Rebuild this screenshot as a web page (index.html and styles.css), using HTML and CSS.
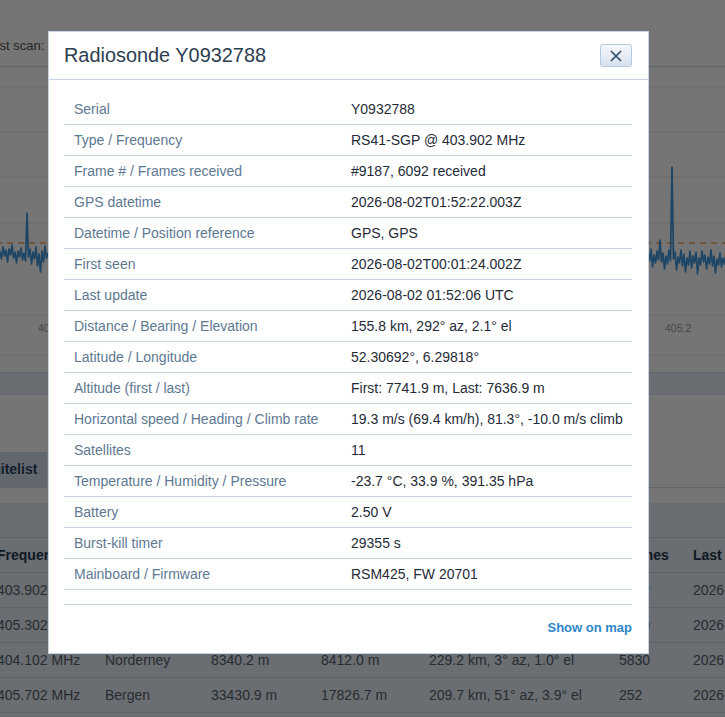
FILE: index.html
```html
<!DOCTYPE html>
<html lang="en">
<head>
  <meta charset="UTF-8">
  <meta name="viewport" content="width=device-width, initial-scale=1.0">
  <title>Radiosonde Y0932788</title>
  <link rel="stylesheet" href="styles.css">
</head>
<body>
  <div class="page">
    <div class="scanbar">Last scan: 2026-08-02 01:52:10 UTC</div>

    <!-- Spectrum -->
    <svg class="chart" width="900" height="306" viewBox="0 0 900 306">
      <g transform="translate(15,0)">
        <line x1="-15" y1="0.5" x2="885" y2="0.5" stroke="#c8dbef" stroke-width="1.5"/>
        <line x1="-15" y1="21" x2="885" y2="21" stroke="#e6e6e6"/>
        <line x1="-15" y1="66" x2="885" y2="66" stroke="#e6e6e6"/>
        <line x1="-15" y1="111" x2="885" y2="111" stroke="#e6e6e6"/>
        <line x1="-15" y1="157" x2="885" y2="157" stroke="#e6e6e6"/>
        <line x1="-15" y1="249" x2="885" y2="249" stroke="#e6e6e6"/>
        <line x1="-15" y1="289" x2="885" y2="289" stroke="#e6e6e6"/>
        <line x1="-15" y1="177" x2="885" y2="177" stroke="#f2a25e" stroke-width="1.3" stroke-dasharray="6 5"/>
        <polyline fill="none" stroke="#3f97dc" stroke-width="1.7" stroke-linejoin="round"
          points="-15,189 -13.5,195 -12,183 -10.5,192 -9,186 -7.5,197 -6,184 -4.5,191 -3,182 -1.5,194
                  0,186 1.5,193 3,181 4.5,190 6,184 7.5,196 9,183 10.5,189 12,179 13.5,192 15,186 16.5,197
                  18,185 19.5,191 21,182 22.5,194 24,187 25.5,195 27,147 28.5,191 30,183 31.5,198 33,186
                  34.5,193 36,181 37.5,200 39,188 40.5,206 42,185 43.5,196 45,180 46.5,192 48,187 49.5,195
                  51,184 120,192 200,186 300,194 400,188 500,193 600,187 640,194
                  645,190 646.5,199 648,186 649.5,195 651,183 652.5,201 654,189 655.5,197 657,185 658.5,194
                  660,174 661.5,196 663,187 664.5,203 666,190 667.5,198 669,184 670.5,195 672,101 673.5,193
                  675,186 676.5,204 678,191 679.5,197 681,184 682.5,200 684,188 685.5,206 687,192 688.5,199
                  690,185 691.5,202 693,190 694.5,197 696,186 697.5,208 699,192 700.5,199 702,185 703.5,196
                  705,189 706.5,203 708,191 709.5,198 711,184 712.5,200 714,190 715.5,207 717,193 718.5,199
                  720,187 721.5,201 723,192 724.5,198 726,188"/>
        <g class="axis-label">
          <text x="38" y="266">400.2</text>
          <text x="163" y="266">401.2</text>
          <text x="288" y="266">402.2</text>
          <text x="413" y="266">403.2</text>
          <text x="538" y="266">404.2</text>
          <text x="665" y="266">405.2</text>
        </g>
      </g>
    </svg>

    <div class="rangebar"></div>

    <div class="tabs">
      <div class="tab">Whitelist</div>
    </div>

    <div class="panel">
      <table class="sondes">
        <thead>
          <tr>
            <th class="c-freq">Frequency</th>
            <th class="c-site">Site</th>
            <th class="c-alt">Altitude</th>
            <th class="c-max">Max altitude</th>
            <th class="c-dist">Distance</th>
            <th class="c-frames">Frames</th>
            <th class="c-last">Last update</th>
          </tr>
        </thead>
        <tbody>
          <tr>
            <td>403.902 MHz</td><td>Deelen</td><td>7636.9 m</td><td>7741.9 m</td>
            <td>155.8 km, 292° az, 2.1° el</td><td>6092</td><td>2026-08-02 01:52:06</td>
          </tr>
          <tr>
            <td>405.302 MHz</td><td>De Bilt</td><td>12850.4 m</td><td>12850.4 m</td>
            <td>98.1 km, 215° az, 7.2° el</td><td>3120</td><td>2026-08-02 01:51:58</td>
          </tr>
          <tr>
            <td>404.102 MHz</td><td>Norderney</td><td>8340.2 m</td><td>8412.0 m</td>
            <td>229.2 km, 3° az, 1.0° el</td><td>5830</td><td>2026-08-02 01:51:44</td>
          </tr>
          <tr>
            <td>405.702 MHz</td><td>Bergen</td><td>33430.9 m</td><td>17826.7 m</td>
            <td>209.7 km, 51° az, 3.9° el</td><td>252</td><td>2026-08-02 01:50:12</td>
          </tr>
        </tbody>
      </table>
    </div>
  </div>

  <div class="backdrop"></div>

  <div class="modal">
    <div class="modal-header">
      <h4 class="modal-title">Radiosonde Y0932788</h4>
      <button class="close" type="button" aria-label="Close">
        <svg width="12" height="12" viewBox="0 0 12 12">
          <path d="M1 1 L11 11 M11 1 L1 11" stroke="#2e4866" stroke-width="1.6" fill="none"/>
        </svg>
      </button>
    </div>
    <div class="modal-body">
      <table class="details">
        <tr><td>Serial</td><td>Y0932788</td></tr>
        <tr><td>Type / Frequency</td><td>RS41-SGP @ 403.902 MHz</td></tr>
        <tr><td>Frame # / Frames received</td><td>#9187, 6092 received</td></tr>
        <tr><td>GPS datetime</td><td>2026-08-02T01:52:22.003Z</td></tr>
        <tr><td>Datetime / Position reference</td><td>GPS, GPS</td></tr>
        <tr><td>First seen</td><td>2026-08-02T00:01:24.002Z</td></tr>
        <tr><td>Last update</td><td>2026-08-02 01:52:06 UTC</td></tr>
        <tr><td>Distance / Bearing / Elevation</td><td>155.8 km, 292° az, 2.1° el</td></tr>
        <tr><td>Latitude / Longitude</td><td>52.30692°, 6.29818°</td></tr>
        <tr><td>Altitude (first / last)</td><td>First: 7741.9 m, Last: 7636.9 m</td></tr>
        <tr><td>Horizontal speed / Heading / Climb rate</td><td>19.3 m/s (69.4 km/h), 81.3°, -10.0 m/s climb</td></tr>
        <tr><td>Satellites</td><td>11</td></tr>
        <tr><td>Temperature / Humidity / Pressure</td><td>-23.7 °C, 33.9 %, 391.35 hPa</td></tr>
        <tr><td>Battery</td><td>2.50 V</td></tr>
        <tr><td>Burst-kill timer</td><td>29355 s</td></tr>
        <tr><td>Mainboard / Firmware</td><td>RSM425, FW 20701</td></tr>
      </table>
    </div>
    <div class="modal-footer">
      <a href="#" class="map-link">Show on map</a>
    </div>
  </div>
</body>
</html>
```

FILE: styles.css
```css
body {
  margin: 0;
  overflow: hidden;
  font-family: "Liberation Sans", Arial, sans-serif;
  background: #ffffff;
  color: #333333;
}

/* page behind the dialog */
.page {
  margin-left: -15px;
  width: 900px;
}
.scanbar {
  height: 66px;
  box-sizing: border-box;
  padding-top: 38px;
  font-size: 13px;
  line-height: 16px;
  color: #555555;
  white-space: nowrap;
}
.chart {
  display: block;
}
.axis-label text {
  font-family: "Liberation Sans", Arial, sans-serif;
  font-size: 10.5px;
  fill: #9a9a9a;
}
.rangebar {
  height: 21px;
  background: #e7eff8;
  border-top: 1px solid #dde3ea;
  border-bottom: 1px solid #dde3ea;
}
.tabs {
  display: flex;
  margin-top: 57px;
  height: 35px;
  border-bottom: 1px solid #d6dee7;
}
.tab {
  margin-left: -12px;
  padding: 0 10px 0 6px;
  background: #d5e0ed;
  font-size: 14px;
  font-weight: bold;
  line-height: 35px;
  color: #2a4560;
}
.panel {
  margin-top: 15px;
  padding-top: 34px;
  background: #e7eff8;
  height: 300px;
}
.sondes {
  border-collapse: collapse;
  table-layout: fixed;
  width: 896px;
  font-size: 14px;
}
.sondes th,
.sondes td {
  padding: 8px 12px;
  line-height: 18px;
  text-align: left;
  white-space: nowrap;
  overflow: visible;
  border-bottom: 1px solid #cfd8e0;
}
.sondes th {
  border-top: 1px solid #cfd8e0;
  color: #22384f;
}
.sondes td {
  color: #55616d;
}
.c-freq { width: 84px; }
.c-site { width: 82px; }
.c-alt { width: 86px; }
.c-max { width: 84px; }
.c-dist { width: 166px; }
.c-frames { width: 50px; }
.c-last { width: 176px; }

/* dialog */
.backdrop {
  position: fixed;
  top: 0;
  left: 0;
  right: 0;
  bottom: 0;
  background: rgba(0, 0, 0, 0.54);
}
.modal {
  position: fixed;
  top: 31px;
  left: 48px;
  width: 599px;
  background: #ffffff;
  border: 1px solid #c8d3df;
}
.modal-header {
  display: flex;
  align-items: center;
  justify-content: space-between;
  padding: 12px 16px 12px 15px;
  border-bottom: 1px solid #c6d4e3;
}
.modal-title {
  margin: 0;
  font-size: 19.9px;
  font-weight: normal;
  line-height: 23px;
  color: #2c3e50;
}
.close {
  display: flex;
  align-items: center;
  justify-content: center;
  width: 32px;
  height: 23px;
  padding: 0;
  border: 1px solid #b5c9de;
  border-radius: 3px;
  background: linear-gradient(#f6f9fc, #d6e2ef);
  cursor: pointer;
}
.modal-body {
  padding: 14px 16px 0 15px;
}
.details {
  width: 100%;
  border-collapse: collapse;
  table-layout: fixed;
  font-size: 14px;
}
.details td {
  padding: 6px 10px;
  line-height: 18px;
  border-bottom: 1px solid #c6d4e3;
  color: #1f2b38;
  white-space: nowrap;
}
.details td:first-child {
  width: 257px;
  color: #5d7893;
}
.modal-footer {
  margin: 14px 16px 0 15px;
  padding: 13px 0 16px;
  border-top: 1px solid #c6d4e3;
  text-align: right;
}
.map-link {
  font-size: 13px;
  font-weight: bold;
  line-height: 18px;
  color: #2e86c9;
  text-decoration: none;
}
```
